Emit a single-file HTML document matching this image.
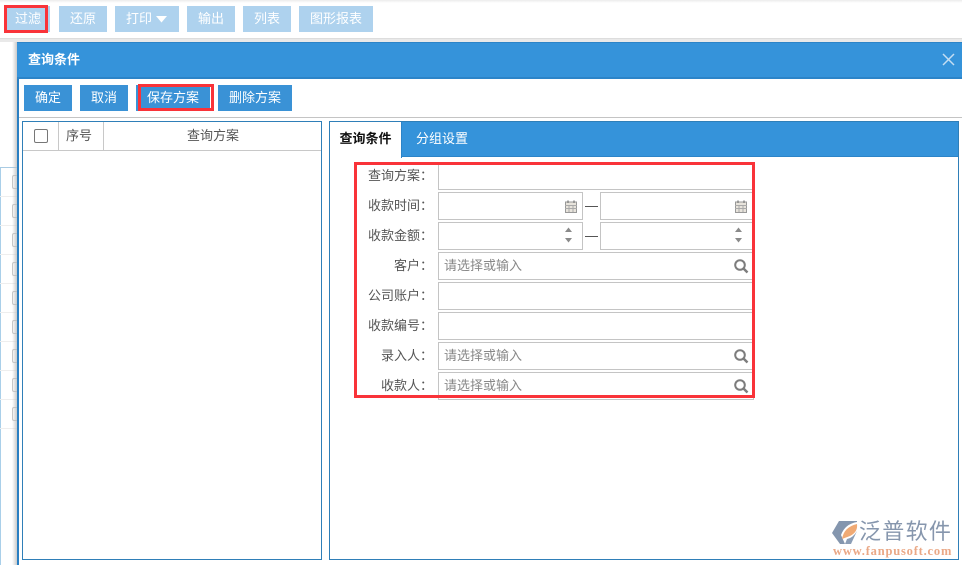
<!DOCTYPE html>
<html><head><meta charset="utf-8">
<style>
*{box-sizing:border-box;margin:0;padding:0}
html,body{width:962px;height:565px;overflow:hidden;background:#fff}
body{position:relative;font:13px/1 "Liberation Sans","Noto Sans CJK SC",sans-serif;color:#444}
.a{position:absolute}
.tb{position:absolute;top:6px;height:26px;background:#aed2ee;color:#fff;text-align:center;line-height:25px;font-size:13px}
.b{position:absolute;top:85px;height:26px;background:#3a92d6;color:#fff;text-align:center;line-height:25px;font-size:13px}
.red{position:absolute;border:3px solid #f93339}
.l{position:absolute;left:354px;width:79px;text-align:right;font-size:13px;color:#555;line-height:16px}
.i{position:absolute;height:28px;border:1px solid #c4c4c4;background:#fff;color:#888;font-size:13px;line-height:26px;padding-left:5px}
.dash{position:absolute;left:585px;width:13px;height:1px;background:#555}
.side{position:absolute;left:0;width:17px;height:1px;background:#eee}
.cb{position:absolute;left:12px;width:6px;height:14px;border:1px solid #c8c8c8;border-right:0;border-radius:2px 0 0 2px}
</style></head><body>

<div class="a" style="left:0;top:0;width:962px;height:3px;background:linear-gradient(#ececec,#fff)"></div>
<div class="a" style="left:0;top:38px;width:962px;height:4px;background:#e9e9e9;border-top:1px solid #ddd"></div>

<div class="tb" style="left:6px;width:44px">过滤</div>
<div class="tb" style="left:59px;width:48px">还原</div>
<div class="tb" style="left:115px;width:64px;text-align:left;padding-left:11px">打印<svg class="a" style="left:41px;top:10px" width="11" height="7"><path d="M0 0H11L5.500 6.500Z" fill="#fff"/></svg></div>
<div class="tb" style="left:187px;width:48px">输出</div>
<div class="tb" style="left:243px;width:48px">列表</div>
<div class="tb" style="left:299px;width:74px">图形报表</div>
<div class="red" style="left:4px;top:5px;width:44px;height:28px"></div>

<!-- background page -->
<div class="a" style="left:0;top:167px;width:17px;height:1px;background:#a9cbe3"></div>
<div class="a" style="left:0;top:168px;width:1px;height:397px;background:#a9cfe9"></div>
<div class="side" style="top:196px"></div><div class="side" style="top:225px"></div><div class="side" style="top:254px"></div><div class="side" style="top:283px"></div><div class="side" style="top:312px"></div><div class="side" style="top:341px"></div><div class="side" style="top:370px"></div><div class="side" style="top:399px"></div><div class="side" style="top:428px"></div>
<div class="cb" style="top:175px"></div><div class="cb" style="top:204px"></div><div class="cb" style="top:233px"></div><div class="cb" style="top:262px"></div><div class="cb" style="top:291px"></div><div class="cb" style="top:320px"></div><div class="cb" style="top:349px"></div><div class="cb" style="top:378px"></div><div class="cb" style="top:407px"></div>
<div class="a" style="left:12px;top:42px;width:5px;height:523px;background:linear-gradient(90deg,rgba(200,200,200,0),rgba(190,190,190,.8))"></div>

<!-- dialog -->
<div class="a" style="left:17px;top:42px;width:945px;height:523px;background:#fff;border-left:2px solid #2a7fc2"></div>
<div class="a" style="left:17px;top:42px;width:945px;height:37px;background:#3593da;border-top:1px solid #2c84c8;border-bottom:2px solid #2c84c8;color:#fff;font-weight:bold;font-size:13px;line-height:33px;padding-left:11px">查询条件</div>
<svg class="a" style="left:941px;top:52px" width="15" height="15"><path d="M2 2L13 13M13 2L2 13" stroke="#c4def2" stroke-width="1.500" fill="none"/></svg>

<div class="b" style="left:24px;width:48px">确定</div>
<div class="b" style="left:80px;width:48px">取消</div>
<div class="b" style="left:136px;width:74px">保存方案</div>
<div class="red" style="left:138px;top:84px;width:76px;height:27px"></div>
<div class="b" style="left:218px;width:74px">删除方案</div>
<div class="a" style="left:19px;top:117px;width:943px;height:1px;background:#c4c4c4"></div>

<!-- left panel -->
<div class="a" style="left:22px;top:121px;width:300px;height:439px;border:1px solid #2f7fb8"></div>
<div class="a" style="left:23px;top:150px;width:298px;height:1px;background:#c8c8c8"></div>
<div class="a" style="left:58px;top:122px;width:1px;height:28px;background:#c8c8c8"></div>
<div class="a" style="left:103px;top:122px;width:1px;height:28px;background:#c8c8c8"></div>
<div class="a" style="left:34px;top:129px;width:14px;height:14px;border:1px solid #777;border-radius:2px"></div>
<div class="a" style="left:66px;top:129px;font-size:13px;color:#555">序号</div>
<div class="a" style="left:187px;top:129px;font-size:13px;color:#555">查询方案</div>

<!-- right panel -->
<div class="a" style="left:329px;top:121px;width:630px;height:439px;border:1px solid #2f7fb8"></div>
<div class="a" style="left:330px;top:122px;width:628px;height:35px;background:#3593da;border-bottom:1px solid #2c84c8"></div>
<div class="a" style="left:330px;top:122px;width:72px;height:36px;background:#fff;border-right:1px solid #2c84c8;color:#111;font-weight:bold;font-size:13px;line-height:33px;text-align:center">查询条件</div>
<div class="a" style="left:416px;top:132px;color:#fff;font-size:13px">分组设置</div>

<!-- form -->
<div class="l" style="top:168px">查询方案：</div>
<div class="l" style="top:198px">收款时间：</div>
<div class="l" style="top:228px">收款金额：</div>
<div class="l" style="top:258px">客户：</div>
<div class="l" style="top:288px">公司账户：</div>
<div class="l" style="top:318px">收款编号：</div>
<div class="l" style="top:348px">录入人：</div>
<div class="l" style="top:378px">收款人：</div>

<div class="i" style="left:438px;top:162px;width:316px"></div>
<div class="i" style="left:438px;top:192px;width:145px"></div>
<div class="dash" style="top:206px"></div>
<div class="i" style="left:600px;top:192px;width:154px"></div>
<div class="i" style="left:438px;top:222px;width:145px"></div>
<div class="dash" style="top:236px"></div>
<div class="i" style="left:600px;top:222px;width:154px"></div>
<div class="i" style="left:438px;top:252px;width:316px">请选择或输入</div>
<div class="i" style="left:438px;top:282px;width:316px"></div>
<div class="i" style="left:438px;top:312px;width:316px"></div>
<div class="i" style="left:438px;top:342px;width:316px">请选择或输入</div>
<div class="i" style="left:438px;top:372px;width:316px">请选择或输入</div>

<svg class="a" style="left:0;top:0" width="962" height="565">
<defs>
<g id="cal"><rect x="0.500" y="2" width="11" height="10.500" fill="#e8e4dc" stroke="#999"/><path d="M0 5.500H12M0 8.500H12M4 5V12M8 5V12" stroke="#aaa" stroke-width="1"/><path d="M3 0.500V3M9 0.500V3" stroke="#888" stroke-width="1.500"/></g>
<g id="spin"><path d="M0 5L3.500 0.500L7 5Z M0 11H7L3.500 15.500Z" fill="#8a8a8a"/></g>
<g id="s"><circle cx="6" cy="6" r="4.800" fill="none" stroke="#7d7d7d" stroke-width="2"/><path d="M9.500 9.500L13.500 13.500" stroke="#7d7d7d" stroke-width="2.500"/></g>
</defs>
<use href="#cal" x="565" y="200"/><use href="#cal" x="735" y="200"/>
<use href="#spin" x="565" y="227"/><use href="#spin" x="735" y="227"/>
<use href="#s" x="734" y="259"/><use href="#s" x="734" y="349"/><use href="#s" x="734" y="379"/>
<!-- logo -->
<path d="M839 521H857V522Q845 524 841 535L845 544H840L832 533Z" fill="#8496ae"/>
<path d="M842 539Q844 527 857 524Q858 532 850 536Z" fill="#f0aa74"/>
<path d="M857 531L851 544H845L847 539Q853 538 857 531Z" fill="#8c9eb6"/>
</svg>
<div class="a" style="left:859px;top:520px;font-size:22px;line-height:24px;color:#8696ad;letter-spacing:1.300px;white-space:nowrap">泛普软件</div>
<div class="a" style="left:833px;top:545px;font:bold 12.500px/12px 'Liberation Serif',serif;color:#eaa886;letter-spacing:0.800px;white-space:nowrap">www.fanpusoft.com</div>

<div class="red" style="left:354px;top:162px;width:401px;height:236px"></div>
</body></html>
